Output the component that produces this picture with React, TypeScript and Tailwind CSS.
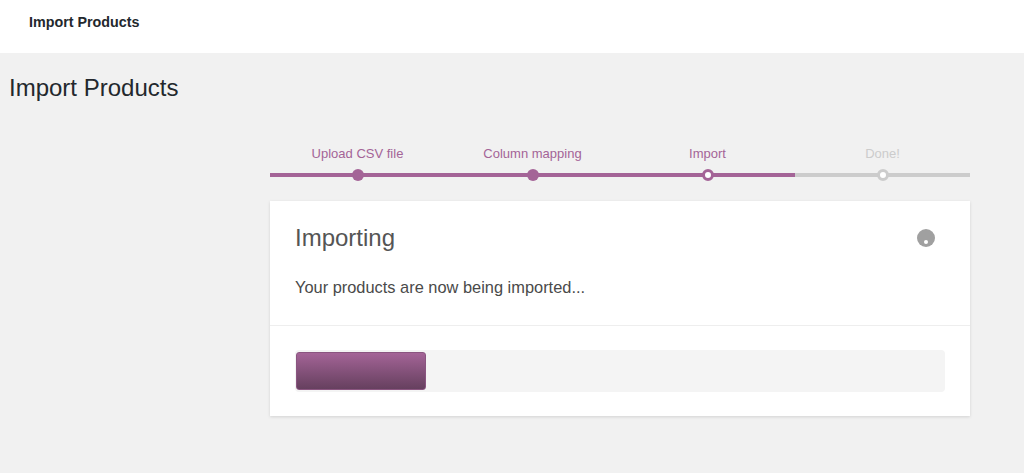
import React from "react";

const steps = [
  { label: "Upload CSV file", state: "done" },
  { label: "Column mapping", state: "done" },
  { label: "Import", state: "active" },
  { label: "Done!", state: "todo" },
];

export default function App() {
  return (
    <div className="min-h-[473px] bg-[#f1f1f1] font-['Liberation_Sans',Arial,sans-serif]">
      <div className="h-[53px] bg-white flex items-center pl-[29px] pb-[8px]">
        <span className="text-[14.3px] font-bold text-[#23282d]">Import Products</span>
      </div>
      <h1 className="pl-[9px] pt-[21px] text-[24px] leading-[28px] text-[#23282d]">Import Products</h1>
      <div className="ml-[270px] w-[700px]">
        <ol className="flex mt-[44px]">
          {steps.map((s, i) => {
            const purple = s.state !== "todo";
            return (
              <li key={i} className="flex-1 flex flex-col items-center">
                <span
                  className={
                    "text-[13px] leading-[16px] " +
                    (purple ? "text-[#a46497]" : "text-[#cccccc]")
                  }
                >
                  {s.label}
                </span>
                <div className="relative w-full h-[12px] mt-[7px] flex items-center justify-center">
                  <div
                    className={
                      "absolute left-0 right-0 top-[4px] h-[4px] " +
                      (purple ? "bg-[#a46497]" : "bg-[#cccccc]")
                    }
                  />
                  {s.state === "done" && (
                    <div className="relative w-[12px] h-[12px] rounded-full bg-[#a46497]" />
                  )}
                  {s.state === "active" && (
                    <div className="relative w-[12px] h-[12px] rounded-full bg-white border-[3px] border-[#a46497]" />
                  )}
                  {s.state === "todo" && (
                    <div className="relative w-[12px] h-[12px] rounded-full bg-white border-[3px] border-[#cccccc]" />
                  )}
                </div>
              </li>
            );
          })}
        </ol>
        <div className="mt-[20px] bg-white shadow-[0_1px_3px_rgba(0,0,0,0.13)]">
          <div className="px-[25px] pt-[22px] pb-[28px] border-b border-[#eeeeee]">
            <div className="flex items-center justify-between">
              <h2 className="text-[24px] leading-[30px] text-[#555555]">Importing</h2>
              <div className="relative w-[18px] h-[18px] rounded-full bg-[#a0a0a0] mr-[10px]">
                <div className="absolute left-[7px] top-[11px] w-[4px] h-[4px] rounded-full bg-white" />
              </div>
            </div>
            <p className="mt-[24px] text-[16.4px] leading-[20px] text-[#4a4a4a]">
              Your products are now being imported...
            </p>
          </div>
          <div className="px-[25px] pt-[24px] pb-[24px]">
            <div className="h-[42px] rounded-[4px] bg-[#f4f4f4] flex items-center pl-[1px]">
              <div className="w-[130px] h-[38px] rounded-[3px] bg-gradient-to-b from-[#a46497] to-[#66405f] border border-[#8a5580]" />
            </div>
          </div>
        </div>
      </div>
    </div>
  );
}
